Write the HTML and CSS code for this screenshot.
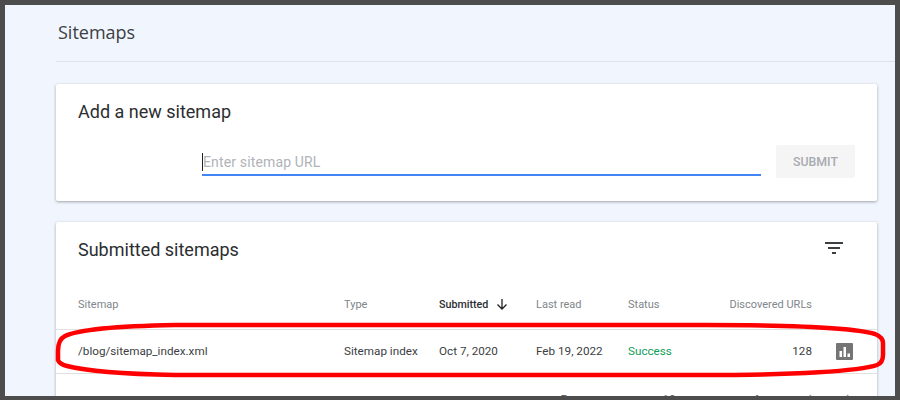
FILE: index.html
```html
<!DOCTYPE html>
<html lang="en">
<head>
<meta charset="utf-8">
<title>Sitemaps</title>
<link rel="stylesheet" href="styles.css">
</head>
<body>
<div class="frame">
  <div class="page">
    <header class="head"><h1>Sitemaps</h1></header>
    <section class="card add">
      <h2>Add a new sitemap</h2>
      <div class="form">
        <div class="field"><span class="caret"></span><span class="placeholder">Enter sitemap URL</span></div>
        <div class="btn">SUBMIT</div>
      </div>
    </section>
    <section class="card list">
      <div class="list-top">
        <h2>Submitted sitemaps</h2>
        <svg class="filter" viewBox="0 0 18 12" width="18" height="12"><path d="M0 1h18M3 6h12M7 11h4" stroke="#3c4043" stroke-width="2" fill="none"/></svg>
      </div>
      <div class="row hdr">
        <span>Sitemap</span><span>Type</span>
        <span class="sorted">Submitted<svg viewBox="0 0 12 12" width="12" height="12"><path d="M6 1v10M1.500 6.500 6 11l4.500-4.500" stroke="#202124" stroke-width="1.300" fill="none"/></svg></span>
        <span>Last read</span><span>Status</span><span class="num">Discovered URLs</span>
      </div>
      <div class="row body">
        <span>/blog/sitemap_index.xml</span><span>Sitemap index</span><span>Oct 7, 2020</span><span>Feb 19, 2022</span><span class="ok">Success</span><span class="num">128</span>
        <svg class="chart" viewBox="0 0 17 17" width="17" height="17"><rect width="17" height="17" rx="1" fill="#757575"/><path d="M3.500 8h2.500v6H3.500zM7.500 4h2.500v10H7.500zM11.500 10.500h2.500V14h-2.500z" fill="#fff"/></svg>
      </div>
      <div class="pager">
        <span>Rows per page:</span><span class="size">10</span><span class="range">1-1 of 1</span>
        <svg class="prev" viewBox="0 0 8 12" width="8" height="12"><path d="M7 1 2 6l5 5" stroke="#9aa0a6" stroke-width="1.500" fill="none"/></svg>
        <svg class="next" viewBox="0 0 8 12" width="8" height="12"><path d="m1 1 5 5-5 5" stroke="#9aa0a6" stroke-width="1.500" fill="none"/></svg>
      </div>
    </section>
    <svg class="mark" viewBox="0 0 890 391" width="890" height="391">
      <path d="M170 320C115 321 75 324 60 331C54 334 53 340 53 346L53 355C54 358 58 360 62 361C85 367 120 369 170 370L700 370C790 370 855 366 872 360C877 358 878 354 878 350L878 338C878 334 875 331 870 329C850 323 790 320 700 320Z" fill="none" stroke="#f00" stroke-width="4.500"/>
    </svg>
  </div>
</div>
</body>
</html>
```
FILE: styles.css
```css
* { box-sizing: border-box; }
html, body { margin: 0; height: 400px; overflow: hidden; }
.frame {
  width: 900px; height: 400px;
  border: solid #4d4d4d;
  border-width: 5px 5px 4px 5px;
  overflow: hidden;
}
.page {
  position: relative;
  height: 391px;
  padding-left: 51px;
  background: #f1f5fd;
  font-family: Roboto, "Liberation Sans", sans-serif;
  color: #3c4043;
}
.head { height: 57px; border-bottom: 1px solid #dfe3e8; padding: 14px 0 0 2px; }
h1 { margin: 0; font: 500 18px/26px "Open Sans", Roboto, sans-serif; color: #3c4043; }
h2 { margin: 0; font: 400 18px/24px Roboto, sans-serif; color: #2b2e31; }
.card {
  width: 821px;
  background: #fff;
  border-radius: 2px;
  box-shadow: 0 1px 3px rgba(60,64,67,.45);
}
.add { height: 117px; margin-top: 22px; padding: 16px 22px 0; }
.form { display: flex; justify-content: flex-end; align-items: flex-start; margin-top: 21px; }
.field {
  display: flex; align-items: center;
  width: 559px; height: 26px; margin-top: 5px;
  border-bottom: 2px solid #4285f4;
}
.caret { width: 1px; height: 18px; background: #202124; }
.placeholder { font-size: 14px; color: #b0b3b7; letter-spacing: .15px; }
.btn {
  width: 79px; height: 33px; margin-left: 15px;
  display: flex; align-items: center; justify-content: center;
  background: #f5f5f5; border-radius: 2px;
  font-size: 12.3px; font-weight: 500; color: #a8abaf;
}
.list { height: 200px; margin-top: 21px; }
.list-top { display: flex; justify-content: space-between; height: 68px; padding: 16px 34px 0 22px; }
.filter { margin-top: 4px; }
.row {
  display: grid;
  grid-template-columns: 266px 95px 97px 92px 92px 92px 24px 17px;
  align-items: center;
  padding-left: 22px;
}
.hdr { height: 40px; font-size: 11px; color: #80868b; padding-bottom: 11px; border-bottom: 1px solid #e0e0e0; }
.sorted { display: flex; align-items: center; gap: 8px; color: #2b2e31; font-weight: 500; font-size: 10.7px; }
.body { height: 44px; padding-bottom: 1px; font-size: 11.7px; color: #3c4043; border-bottom: 1px solid #e0e0e0; }
.ok { color: #0f9d58; }
.num { text-align: right; white-space: nowrap; }
.chart { grid-column: 8; }
.pager {
  display: flex; align-items: center; justify-content: flex-end;
  height: 40px; padding: 12px 23px 0 0;
  font-size: 12px; color: #5f6368;
}
.size { margin-left: 20px; }
.range { margin-left: 54px; font-size: 11px; }
.prev { margin-left: 37px; }
.next { margin-left: 34px; }
.mark { position: absolute; left: 0; top: 0; pointer-events: none; }
```
